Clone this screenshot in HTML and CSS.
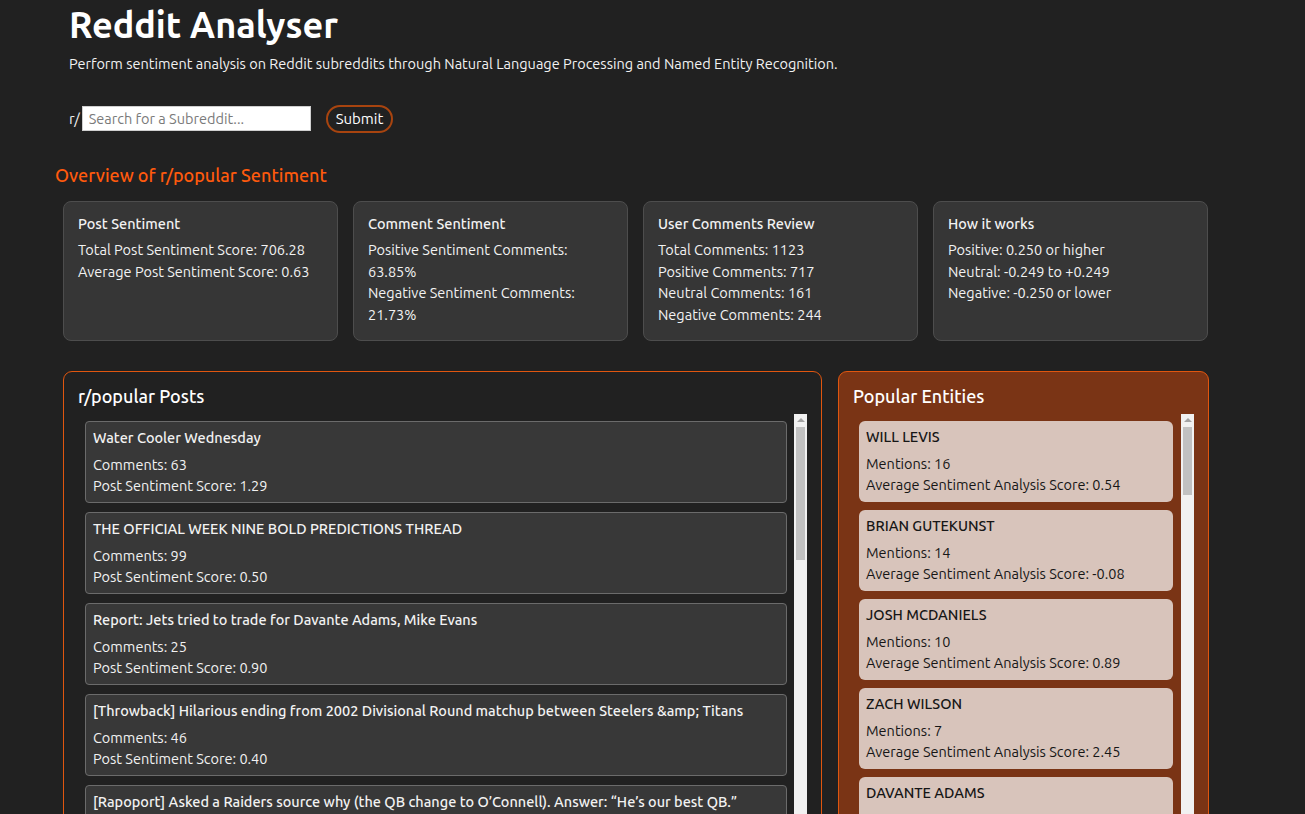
FILE: index.html
```html
<!DOCTYPE html>
<html lang="en">
<head>
<meta charset="utf-8">
<title>Reddit Analyser</title>
<link rel="stylesheet" href="styles.css">
</head>
<body>
<header class="hero">
  <h1 class="app-title">Reddit Analyser</h1>
  <p class="app-sub">Perform sentiment analysis on Reddit subreddits through Natural Language Processing and Named Entity Recognition.</p>
  <form class="search">
    <span class="prefix">r/</span>
    <input class="search-input" type="text" placeholder="Search for a Subreddit...">
    <button class="submit" type="button">Submit</button>
  </form>
</header>

<h2 class="overview-title">Overview of r/popular Sentiment</h2>

<section class="cards">
  <div class="card">
    <h3 class="card-title">Post Sentiment</h3>
    <p>Total Post Sentiment Score: 706.28</p>
    <p>Average Post Sentiment Score: 0.63</p>
  </div>
  <div class="card">
    <h3 class="card-title">Comment Sentiment</h3>
    <p>Positive Sentiment Comments: 63.85%</p>
    <p>Negative Sentiment Comments: 21.73%</p>
  </div>
  <div class="card">
    <h3 class="card-title">User Comments Review</h3>
    <p>Total Comments: 1123</p>
    <p>Positive Comments: 717</p>
    <p>Neutral Comments: 161</p>
    <p>Negative Comments: 244</p>
  </div>
  <div class="card">
    <h3 class="card-title">How it works</h3>
    <p>Positive: 0.250 or higher</p>
    <p>Neutral: -0.249 to +0.249</p>
    <p>Negative: -0.250 or lower</p>
  </div>
</section>

<section class="panels">
  <div class="panel posts-panel">
    <h2 class="panel-title">r/popular Posts</h2>
    <div class="scroll-wrap">
      <div class="list posts-list">
        <div class="post"><h4>Water Cooler Wednesday</h4><p>Comments: 63</p><p>Post Sentiment Score: 1.29</p></div>
        <div class="post"><h4>THE OFFICIAL WEEK NINE BOLD PREDICTIONS THREAD</h4><p>Comments: 99</p><p>Post Sentiment Score: 0.50</p></div>
        <div class="post"><h4>Report: Jets tried to trade for Davante Adams, Mike Evans</h4><p>Comments: 25</p><p>Post Sentiment Score: 0.90</p></div>
        <div class="post"><h4>[Throwback] Hilarious ending from 2002 Divisional Round matchup between Steelers &amp;amp; Titans</h4><p>Comments: 46</p><p>Post Sentiment Score: 0.40</p></div>
        <div class="post"><h4>[Rapoport] Asked a Raiders source why (the QB change to O’Connell). Answer: “He’s our best QB.”</h4><p>Comments: 58</p><p>Post Sentiment Score: 0.71</p></div>
      </div>
      <div class="sbar">
        <div class="sbar-btn"><span class="arrow-up"></span></div>
        <div class="sbar-thumb thumb-posts"></div>
      </div>
    </div>
  </div>
  <div class="panel entities-panel">
    <h2 class="panel-title">Popular Entities</h2>
    <div class="scroll-wrap">
      <div class="list entities-list">
        <div class="entity"><h4>WILL LEVIS</h4><p>Mentions: 16</p><p>Average Sentiment Analysis Score: 0.54</p></div>
        <div class="entity"><h4>BRIAN GUTEKUNST</h4><p>Mentions: 14</p><p>Average Sentiment Analysis Score: -0.08</p></div>
        <div class="entity"><h4>JOSH MCDANIELS</h4><p>Mentions: 10</p><p>Average Sentiment Analysis Score: 0.89</p></div>
        <div class="entity"><h4>ZACH WILSON</h4><p>Mentions: 7</p><p>Average Sentiment Analysis Score: 2.45</p></div>
        <div class="entity"><h4>DAVANTE ADAMS</h4><p>Mentions: 6</p><p>Average Sentiment Analysis Score: 0.90</p></div>
      </div>
      <div class="sbar">
        <div class="sbar-btn"><span class="arrow-up"></span></div>
        <div class="sbar-thumb thumb-entities"></div>
      </div>
    </div>
  </div>
</section>
</body>
</html>
```

FILE: styles.css
```css
* { box-sizing: border-box; }

html, body {
  margin: 0;
  padding: 0;
  background: #212121;
  color: #f2f2f2;
  font-family: Ubuntu, "Noto Sans", "Open Sans", sans-serif;
  font-size: 14.5px;
  line-height: 21.5px;
  overflow: hidden;
}

p, h1, h2, h3, h4 { margin: 0; }

.hero {
  padding: 0 0 0 69px;
}

.app-title {
  font-size: 36px;
  line-height: 50px;
  font-weight: 600;
  color: #ffffff;
}

.app-sub {
  margin-top: 3px;
  font-size: 14.5px;
}

.search {
  margin-top: 30px;
  display: flex;
  align-items: center;
  height: 28px;
}

.prefix {
  font-size: 15px;
  margin-right: 2px;
}

.search-input {
  width: 229px;
  height: 25px;
  border: 1px solid #cfcfcf;
  background: #ffffff;
  padding: 0 6px;
  font-family: inherit;
  font-size: 14.5px;
  color: #333;
  outline: none;
}

.search-input::placeholder { color: #7a7a7a; }

.submit {
  margin-left: 15px;
  height: 28px;
  padding: 0 8px;
  border: 2px solid #a8440f;
  border-radius: 14px;
  background: transparent;
  color: #ffffff;
  font-family: inherit;
  font-size: 15px;
}

.overview-title {
  margin: 30px 0 0 55px;
  font-size: 18px;
  line-height: 24px;
  font-weight: 500;
  color: #ff5a0d;
}

.cards {
  margin: 14px 0 0 63px;
  width: 1146px;
  display: grid;
  grid-template-columns: repeat(4, 275px);
  gap: 15px;
}

.card {
  height: 140px;
  background: #363636;
  border: 1px solid #4d4d4d;
  border-radius: 8px;
  padding: 11px 14px;
}

.card-title {
  font-size: 14.5px;
  font-weight: 500;
  margin-bottom: 5px;
}

.panels {
  margin: 30px 0 0 63px;
  width: 1146px;
  display: grid;
  grid-template-columns: 759px 371px;
  gap: 16px;
}

.panel {
  border: 1px solid #e0560f;
  border-radius: 9px;
  padding: 12px 14px 14px 14px;
  height: 480px;
}

.posts-panel { background: #212121; }
.entities-panel { background: #7a3415; }

.panel-title {
  font-size: 18px;
  line-height: 24px;
  font-weight: 500;
  color: #ffffff;
  margin-bottom: 6px;
}

.scroll-wrap {
  display: flex;
  height: 440px;
}

.list {
  flex: 1;
  overflow: hidden;
  line-height: 21px;
}

.posts-list { padding: 7px 7px 0 7px; }
.entities-list { padding: 7px 8px 0 6px; }

.post {
  padding: 5px 7px 6px 7px;
  margin-bottom: 9px;
  background: #383838;
  border: 1px solid #6b6b6b;
  border-radius: 4px;
}

.entity {
  padding: 5px 7px 7px 7px;
  margin-bottom: 8px;
  background: #d8c4bb;
  border-radius: 6px;
  color: #161616;
}

.post h4, .entity h4 {
  font-size: 14.5px;
  font-weight: 500;
  margin-bottom: 6px;
}

.sbar {
  width: 13px;
  background: #f1f1f1;
  display: flex;
  flex-direction: column;
}

.sbar-btn {
  height: 13px;
  display: flex;
  align-items: center;
  justify-content: center;
}

.arrow-up {
  width: 0;
  height: 0;
  border-left: 4px solid transparent;
  border-right: 4px solid transparent;
  border-bottom: 4px solid #a3a3a3;
}

.sbar-thumb {
  margin: 0 2px;
  background: #c1c1c1;
}

.thumb-posts { height: 133px; }
.thumb-entities { height: 68px; }
```
